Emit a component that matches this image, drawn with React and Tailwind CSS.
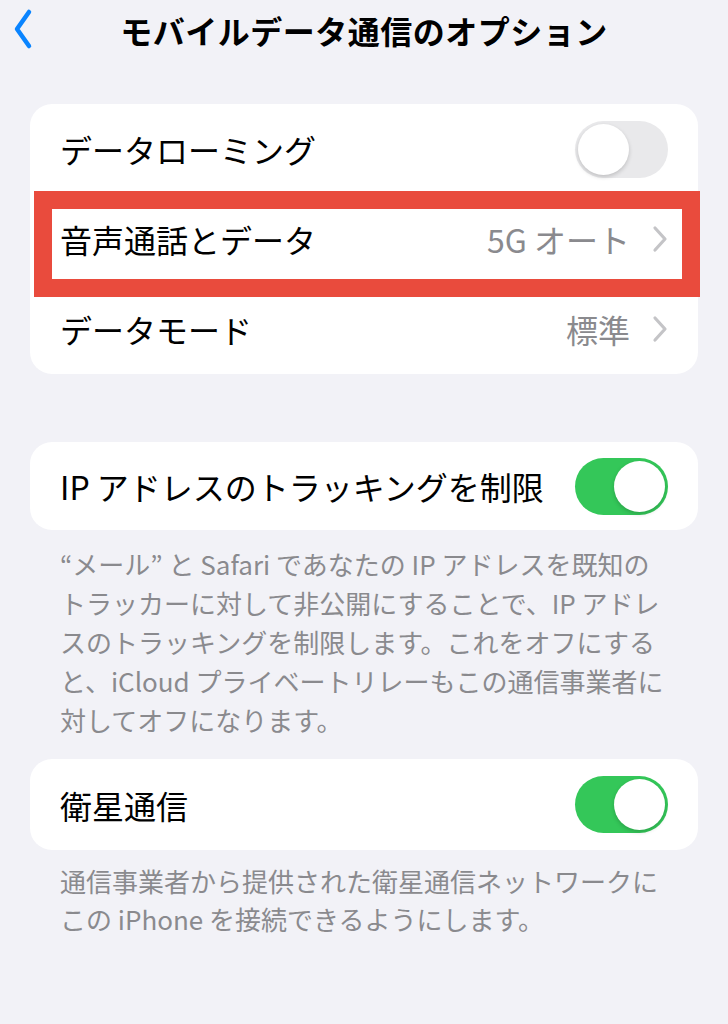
import React from "react";

const font = { fontFamily: '"Noto Sans CJK JP", "Noto Sans", sans-serif' };

function Toggle({ on }) {
  return (
    <div
      className={`w-[93px] h-[57px] rounded-full p-[3px] flex ${
        on ? "bg-[#34c759] justify-end" : "bg-[#e9e9eb] justify-start"
      }`}
    >
      <div className="w-[51px] h-[51px] rounded-full bg-white shadow-[0_2px_4px_rgba(0,0,0,0.18)]" />
    </div>
  );
}

function Chevron() {
  return (
    <svg width="16" height="28" viewBox="0 0 16 28" className="ml-[22px]">
      <path
        d="M3 3 L13 14 L3 25"
        fill="none"
        stroke="#c4c4c7"
        strokeWidth="3.2"
        strokeLinecap="round"
        strokeLinejoin="round"
      />
    </svg>
  );
}

function Row({ label, value, toggle }) {
  return (
    <div className="h-[90px] flex items-center justify-between pl-[30px] pr-[30px]">
      <span className="text-[32px] text-black leading-none">{label}</span>
      {toggle !== undefined ? (
        <Toggle on={toggle} />
      ) : (
        <div className="flex items-center">
          <span className="text-[32px] text-[#8a8a8e] leading-none">{value}</span>
          <Chevron />
        </div>
      )}
    </div>
  );
}

export default function App() {
  return (
    <div className="w-[728px] h-[1024px] bg-[#f2f2f7] overflow-hidden" style={font}>
      {/* ヘッダー */}
      <div className="relative h-[60px] flex items-center justify-center">
        <svg width="24" height="44" viewBox="0 0 24 44" className="absolute left-[10px] top-[7px]">
          <path
            d="M19 5 L7 22 L19 39"
            fill="none"
            stroke="#0a84ff"
            strokeWidth="4.5"
            strokeLinecap="round"
            strokeLinejoin="round"
          />
        </svg>
        <h1 className="text-[32px] font-bold text-black tracking-[0.5px]">
          モバイルデータ通信のオプション
        </h1>
      </div>

      {/* カード1 */}
      <div className="relative mx-[30px] mt-[44px] bg-white rounded-[22px]">
        <Row label="データローミング" toggle={false} />
        <Row label="音声通話とデータ" value="5G オート" />
        <Row label="データモード" value="標準" />
        <div className="absolute left-[4px] top-[87px] w-[666px] h-[106px] border-[18px] border-[#e94b3d]" />
      </div>

      {/* カード2 */}
      <div className="mx-[30px] mt-[68px] bg-white rounded-[22px]">
        <div className="h-[88px] flex items-center justify-between pl-[30px] pr-[30px]">
          <span className="text-[32px] text-black leading-none">
            IP アドレスのトラッキングを制限
          </span>
          <Toggle on />
        </div>
      </div>
      <p className="px-[60px] pt-[14px] text-[26px] leading-[39px] text-[#8a8a8e]">
        “メール” と Safari であなたの IP アドレスを既知の
        <br />
        トラッカーに対して非公開にすることで、IP アドレ
        <br />
        スのトラッキングを制限します。これをオフにする
        <br />
        と、iCloud プライベートリレーもこの通信事業者に
        <br />
        対してオフになります。
      </p>

      {/* カード3 */}
      <div className="mx-[30px] mt-[20px] bg-white rounded-[22px]">
        <div className="h-[91px] flex items-center justify-between pl-[30px] pr-[30px]">
          <span className="text-[32px] text-black leading-none">衛星通信</span>
          <Toggle on />
        </div>
      </div>
      <p className="px-[60px] pt-[12px] text-[26px] leading-[38px] text-[#8a8a8e]">
        通信事業者から提供された衛星通信ネットワークに
        <br />
        この iPhone を接続できるようにします。
      </p>
    </div>
  );
}
